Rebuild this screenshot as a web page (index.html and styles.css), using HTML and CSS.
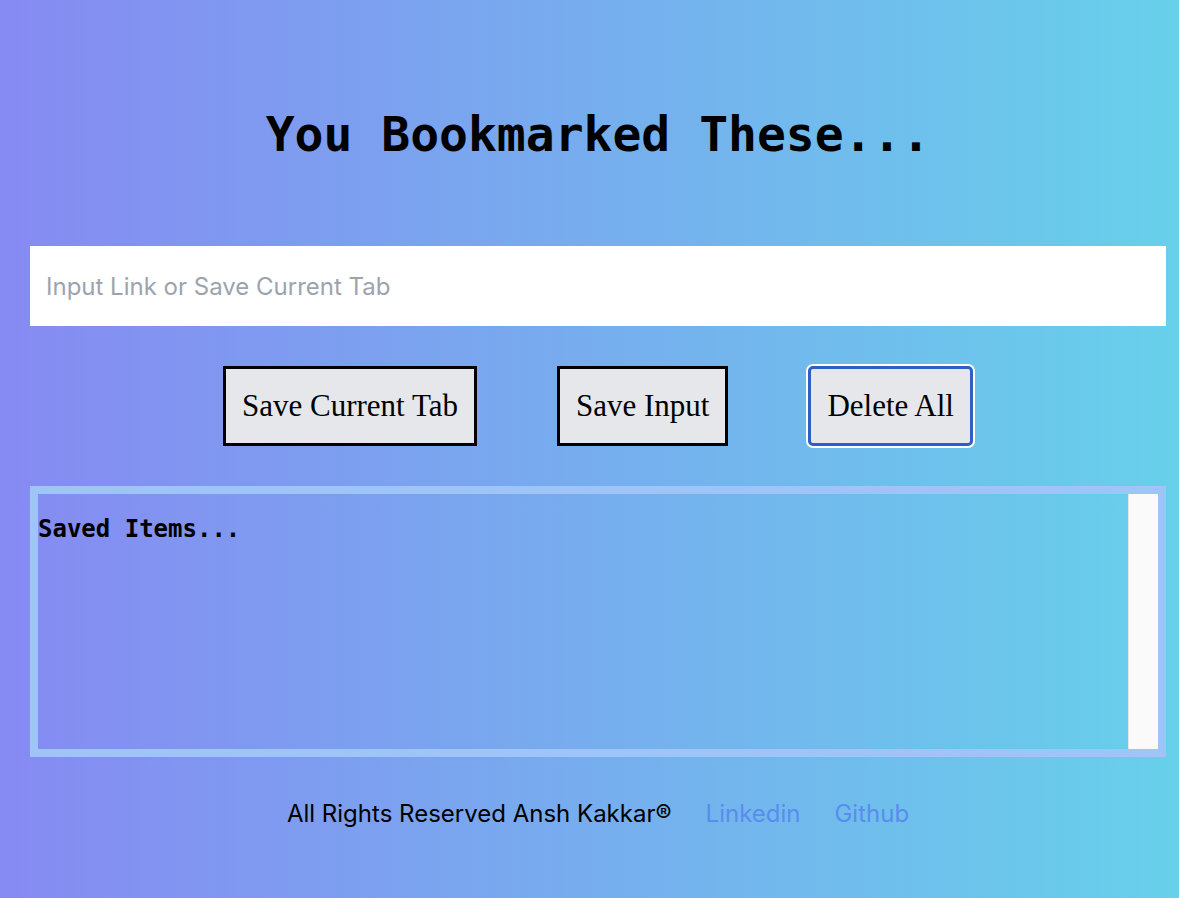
FILE: index.html
```html
<!DOCTYPE html>
<html lang="en">
<head>
<meta charset="utf-8">
<title>You Bookmarked These...</title>
<link rel="stylesheet" href="styles.css">
</head>
<body>
<main class="page">
  <h1 class="title">You Bookmarked These...</h1>
  <input class="link-input" type="text" placeholder="Input Link or Save Current Tab">
  <div class="actions">
    <button class="btn">Save Current Tab</button>
    <button class="btn">Save Input</button>
    <button class="btn btn-focus">Delete All</button>
  </div>
  <section class="saved">
    <div class="saved-list">
      <h2 class="saved-title">Saved Items...</h2>
    </div>
    <div class="scrollbar"></div>
  </section>
  <footer class="footer">
    <span class="rights">All Rights Reserved Ansh Kakkar®</span>
    <a class="footer-link" href="#">Linkedin</a>
    <a class="footer-link" href="#">Github</a>
  </footer>
</main>
</body>
</html>
```

FILE: styles.css
```css
html, body {
  margin: 0;
  padding: 0;
}
body {
  width: 1179px;
  height: 898px;
  overflow: hidden;
  background: linear-gradient(to right, #868af2, #67d0ea);
  font-family: Inter, "Noto Sans", sans-serif;
}
.page {
  display: flex;
  flex-direction: column;
  align-items: center;
  padding: 0 13px 0 30px;
}
.title {
  margin: 104px 0 0;
  font-family: "DejaVu Sans Mono", monospace;
  font-weight: bold;
  font-size: 48px;
  line-height: 60px;
  color: #000;
}
.link-input {
  box-sizing: border-box;
  margin-top: 82px;
  width: 1136px;
  height: 80px;
  border: none;
  outline: none;
  padding: 0 16px;
  background: #fff;
  font-family: Inter, "Noto Sans", sans-serif;
  font-size: 24px;
  color: #111;
}
.link-input::placeholder {
  color: #9ca3af;
}
.actions {
  display: flex;
  gap: 80px;
  margin-top: 40px;
}
.btn {
  box-sizing: border-box;
  height: 80px;
  padding: 0 16px;
  border: 3px solid #000;
  background: #e5e7eb;
  font-family: "Liberation Serif", serif;
  font-size: 31px;
  color: #000;
}
.btn-focus {
  border-color: #2f5fc6;
  border-radius: 5px;
  box-shadow: 0 0 0 2px #fff;
}
.saved {
  box-sizing: border-box;
  margin-top: 40px;
  width: 1136px;
  height: 271px;
  border: 8px solid #9ec4f8;
  display: flex;
}
.saved-list {
  flex: 1;
}
.saved-title {
  margin: 21px 0 0;
  font-family: "DejaVu Sans Mono", monospace;
  font-weight: bold;
  font-size: 24px;
  line-height: 28px;
  color: #000;
}
.scrollbar {
  width: 29px;
  background: #fafafa;
  border-left: 1px solid #e6e6e6;
}
.footer {
  display: flex;
  align-items: baseline;
  gap: 34px;
  margin-top: 43px;
  font-size: 24px;
  line-height: 28px;
}
.rights {
  color: #000;
}
.footer-link {
  color: #5a8bef;
  text-decoration: none;
}
```
